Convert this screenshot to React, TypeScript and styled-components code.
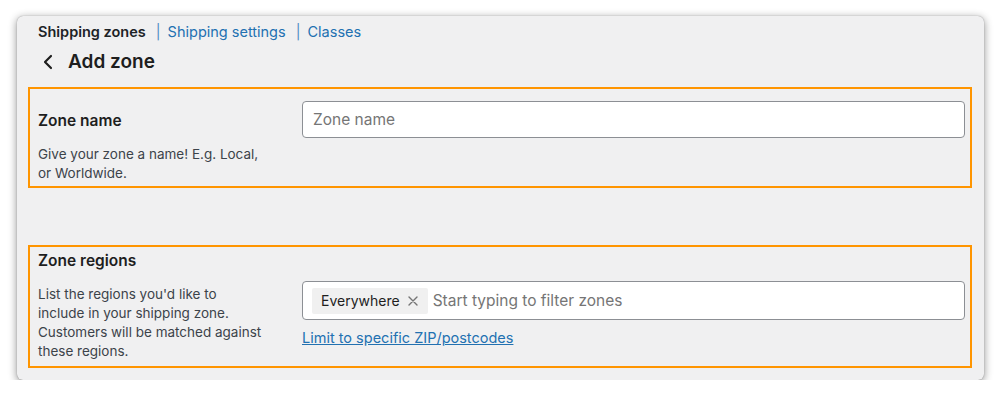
import React from "react";
import styled, { createGlobalStyle } from "styled-components";

const GlobalStyle = createGlobalStyle`
  body {
    margin: 0;
    background: #ffffff;
    font-family: Inter, "Noto Sans", "Liberation Sans", sans-serif;
    color: #1e1e1e;
  }
`;

const Window = styled.div`
  margin: 16px 0 0 17px;
  width: 967px;
  height: 364px;
  box-sizing: border-box;
  background: #f0f0f1;
  border-radius: 6px;
  box-shadow: 0 2px 8px rgba(0, 0, 0, 0.45), 0 0 1px rgba(0, 0, 0, 0.4);
  padding: 6px 12px 0 11px;
  overflow: hidden;
`;

const Tabs = styled.nav`
  display: flex;
  align-items: center;
  padding-left: 10px;
  height: 20px;
  font-size: 14.5px;
  line-height: 20px;
`;

const Tab = styled.a<{ $current?: boolean }>`
  color: ${(p) => (p.$current ? "#1d2327" : "#2271b1")};
  font-weight: ${(p) => (p.$current ? 600 : 400)};
  text-decoration: none;
`;

const Sep = styled.span<{ $left: number }>`
  color: #4f8cc4;
  margin: 0 7px 0 ${(p) => p.$left}px;
`;

const Heading = styled.h1`
  display: flex;
  align-items: center;
  gap: 14px;
  margin: 7px 0 0 10px;
  font-size: 19px;
  line-height: 26px;
  font-weight: 600;
  color: #1e1e1e;

  svg {
    margin-left: 4px;
  }
`;

const Section = styled.section<{ $mt: number }>`
  margin-top: ${(p) => p.$mt}px;
  border: 2px solid #ff9500;
  display: flex;
  gap: 39px;
  padding: 0 5px 0 8px;
`;

const Info = styled.div<{ $pt: number; $pb: number }>`
  width: 225px;
  flex: none;
  padding: ${(p) => p.$pt}px 0 ${(p) => p.$pb}px;
`;

const Label = styled.h2`
  margin: 0;
  font-size: 15.5px;
  line-height: 20px;
  font-weight: 600;
  color: #1e1e1e;
`;

const Desc = styled.p`
  margin: 14px 0 0;
  font-size: 13.5px;
  line-height: 19px;
  color: #3c434a;
`;

const Field = styled.div<{ $pt: number }>`
  flex: 1;
  padding-top: ${(p) => p.$pt}px;
`;

const TextInput = styled.input`
  display: block;
  width: 100%;
  box-sizing: border-box;
  height: 37px;
  border: 1px solid #8c8f94;
  border-radius: 4px;
  background: #fff;
  padding: 0 10px;
  font-family: inherit;
  font-size: 15.5px;
  color: #1e1e1e;
  outline: none;

  &::placeholder {
    color: #757575;
  }
`;

const TokenBox = styled.div`
  display: flex;
  align-items: center;
  gap: 5px;
  height: 39px;
  box-sizing: border-box;
  border: 1px solid #8c8f94;
  border-radius: 4px;
  background: #fff;
  padding: 0 9px;
`;

const Chip = styled.span`
  display: flex;
  align-items: center;
  gap: 8px;
  height: 26px;
  padding: 0 10px 0 9px;
  background: #f0f0f0;
  border-radius: 2px;
  font-size: 14px;
  color: #1e1e1e;
`;

const ChipRemove = styled.span`
  display: flex;
  color: #757575;
`;

const TokenInput = styled.input`
  flex: 1;
  border: none;
  outline: none;
  font-family: inherit;
  font-size: 15.5px;
  padding: 0;
  background: transparent;

  &::placeholder {
    color: #757575;
  }
`;

const Link = styled.a`
  display: inline-block;
  margin-top: 8px;
  font-size: 14.5px;
  line-height: 20px;
  color: #2271b1;
  text-decoration: underline;
`;

const ChevronLeft = () => (
  <svg width="12" height="16" viewBox="0 0 12 16" fill="none">
    <path d="M9 2 L3 8 L9 14" stroke="#1e1e1e" strokeWidth="2.2" strokeLinecap="round" strokeLinejoin="round" />
  </svg>
);

const Cross = () => (
  <svg width="10" height="10" viewBox="0 0 10 10" fill="none">
    <path d="M1 1 L9 9 M9 1 L1 9" stroke="currentColor" strokeWidth="1.4" strokeLinecap="round" />
  </svg>
);

export default function App() {
  return (
    <>
      <GlobalStyle />
      <Window>
        <Tabs>
          <Tab $current>Shipping zones</Tab>
          <Sep $left={10}>|</Sep>
          <Tab href="#">Shipping settings</Tab>
          <Sep $left={10}>|</Sep>
          <Tab href="#">Classes</Tab>
        </Tabs>
        <Heading>
          <ChevronLeft />
          Add zone
        </Heading>

        <Section $mt={12}>
          <Info $pt={22} $pb={3}>
            <Label>Zone name</Label>
            <Desc>Give your zone a name! E.g. Local, or Worldwide.</Desc>
          </Info>
          <Field $pt={12}>
            <TextInput placeholder="Zone name" />
          </Field>
        </Section>

        <Section $mt={57}>
          <Info $pt={4} $pb={5}>
            <Label>Zone regions</Label>
            <Desc>
              List the regions you'd like to include in your shipping zone. Customers will be matched against these
              regions.
            </Desc>
          </Info>
          <Field $pt={34}>
            <TokenBox>
              <Chip>
                Everywhere
                <ChipRemove>
                  <Cross />
                </ChipRemove>
              </Chip>
              <TokenInput placeholder="Start typing to filter zones" />
            </TokenBox>
            <Link href="#">Limit to specific ZIP/postcodes</Link>
          </Field>
        </Section>
      </Window>
    </>
  );
}
